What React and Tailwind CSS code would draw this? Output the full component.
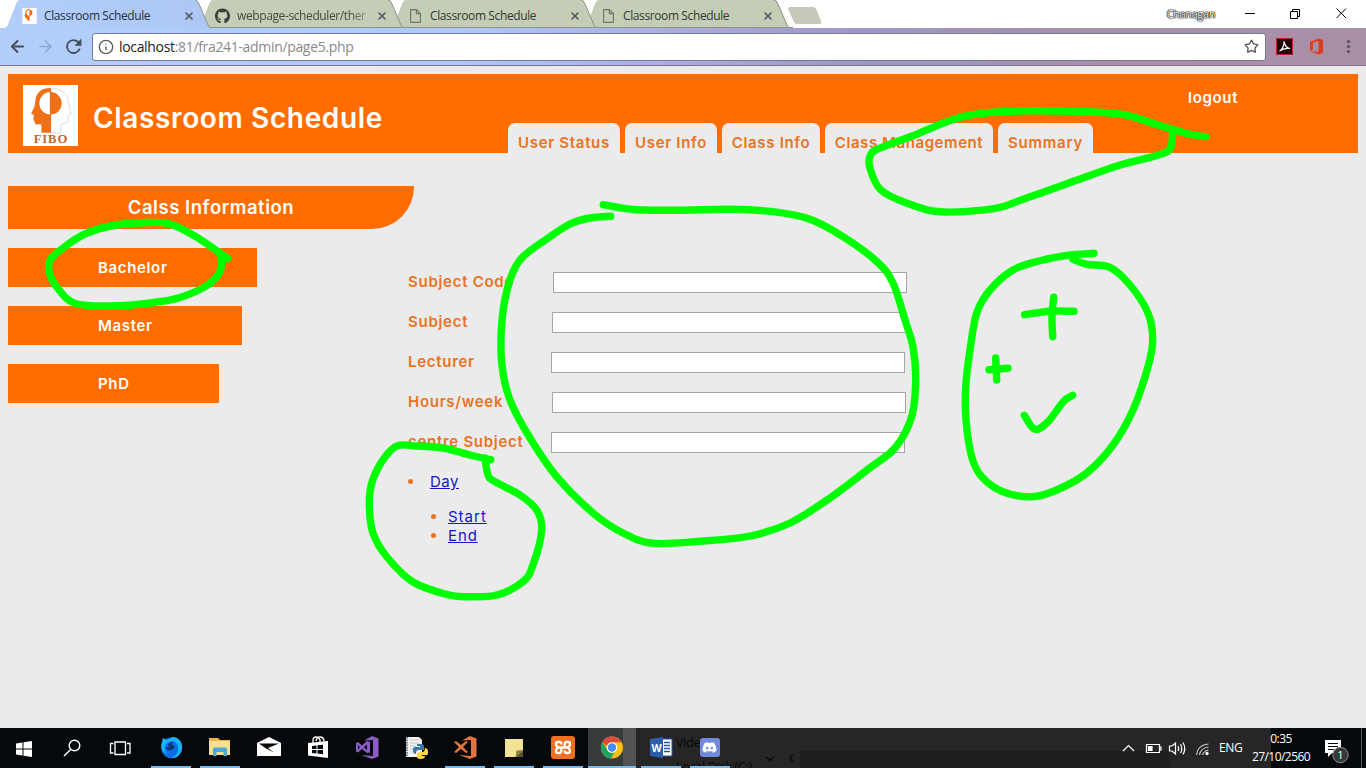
import React from "react";
import { FaGithub, FaDiscord } from "react-icons/fa";
import { ArrowLeft, ArrowRight, Info, Star, X, ChevronDown, ChevronLeft } from "lucide-react";

const STROKES = [
  [[603.3,204.7],[633,209.5],[677,210.3],[730,209.3],[773,211.7],[810,219.3],[843,236.7],[877,261.7],[893,283],[905,320],[913,347],[915.7,380],[911.7,416.7],[895,448],[867,470],[830,498],[790,523],[750,536],[703,541],[653,543.3],[623,533],[593,513],[557,477],[530,438],[510,400],[501.7,363],[502.3,317],[510,280],[521.7,258],[546.7,239],[570,224],[590,218],[610.7,216.3]],
  [[1206,136.7],[1189,134],[1158,125],[1124,114.7],[1086,111.7],[1008,111.3],[960,117.3],[912,136],[881,147.7],[871,154],[869.7,167],[881,190],[912,205],[943,212],[994,208.7],[1021,200],[1069,183],[1117,166],[1155,156],[1170,149],[1172.6,132]],
  [[227.5,258.5],[213,248],[193,235],[170,224],[147,222.5],[113,225.5],[87,233],[67,245],[50.5,259.5],[49.5,273],[58,288.5],[77,304],[123,305.5],[157,302],[180,297.5],[207,285.5],[220,271.5],[221,255]],
  [[490.7,459.7],[470,455],[443,448],[417,446],[398,445.5],[385,457],[372.7,480],[369.3,503],[373,533],[387,557],[413,582],[447,594.5],[467,596.7],[497,595],[523,581.7],[533,565],[541.7,530],[536.7,510],[520,495],[495,481.7],[488,475],[485,458]],
  [[1094,253.3],[1066.7,255.3],[1040,260.7],[1013,270],[990,290],[976.7,313],[970,350],[965.7,386.7],[966,420],[971.7,456.7],[981.7,476.7],[1003,491.7],[1031.7,496.7],[1056.7,490],[1086.7,473],[1113,445],[1133,410],[1148,366.7],[1152.7,340],[1148,313],[1130,285],[1110,267.3],[1086.7,264.3],[1073,259.3]],
  [[1024.7,314.7],[1050,311.3],[1074,311.3]],
  [[1053.7,297.3],[1052,316.7],[1052.7,336.7]],
  [[989,369.7],[1008,368.3]],
  [[995.7,358],[996.7,380]],
  [[1024.3,415.3],[1035,429.3],[1048,421.7],[1063.3,401.7],[1072.7,395.3]],
];

function smooth(points) {
  let d = `M${points[0][0]} ${points[0][1]}`;
  for (let i = 0; i < points.length - 1; i++) {
    const a = points[i - 1] || points[i];
    const b = points[i];
    const c = points[i + 1];
    const e = points[i + 2] || c;
    d += `C${b[0] + (c[0] - a[0]) / 6} ${b[1] + (c[1] - a[1]) / 6} ${c[0] - (e[0] - b[0]) / 6} ${c[1] - (e[1] - b[1]) / 6} ${c[0]} ${c[1]}`;
  }
  return d;
}

function Ink() {
  return (
    <svg className="pointer-events-none absolute left-0 top-0 z-50" width="1366" height="768" fill="none" stroke="#00ff00" strokeWidth="7.4" strokeLinecap="round" strokeLinejoin="round">
      {STROKES.map((s, i) => <path key={i} d={smooth(s)} />)}
    </svg>
  );
}

function FiboLogo({ className, label }) {
  return (
    <svg className={className} viewBox="0 0 54 60">
      <rect width="54" height="60" fill="#fff" />
      <path d="M27 3C17 3 12 9 12 17C12 20 10 24 8 28L11 30L10 33L12 38C13 40 17 38 18 39L18 47H27Z" fill="#f07018" />
      <path d="M27 3C38 3 44 9 45 17L47 29L44 31L44 36C42 38 39 37 37 39L37 47H27" fill="none" stroke="#d5d5dc" strokeWidth=".9" />
      <circle cx="27" cy="18" r="11" fill="#f07018" />
      <path d="M27 7A11 11 0 0 0 27 29Z" fill="#fff" />
      <path d="M27 3V47" stroke="#f07018" strokeWidth="1.2" />
      {label && <text x="27" y="57.500" textAnchor="middle" textLength="33" fontSize="12.500" fontWeight="700" fill="#c8642c" fontFamily="Liberation Serif, serif">FIBO</text>}
    </svg>
  );
}

function PageIcon() {
  return (
    <svg width="11" height="14" viewBox="0 0 11 14" fill="none" stroke="#6c7266" strokeWidth="1.1">
      <path d="M.6 .6H6.4L10.4 4.6V13.4H.6ZM6.4 .6V4.6H10.4" />
    </svg>
  );
}

const TABS = [
  { title: "Classroom Schedule", icon: <FiboLogo className="h-4 w-[15px]" />, z: "z-40 w-[193px]", fill: "url(#active)", text: "text-[#26303f]", active: true },
  { title: "webpage-scheduler/ther", icon: <FaGithub size={16} color="#3a3f38" />, z: "z-30 w-[193px]", fill: "#c4ceb7", text: "text-[#454b40] [mask-image:linear-gradient(90deg,#000_112px,#0005_132px)]" },
  { title: "Classroom Schedule", icon: <PageIcon />, z: "z-20 w-[193px]", fill: "#c4ceb7", text: "text-[#33382f]" },
  { title: "Classroom Schedule", icon: <PageIcon />, z: "z-10 w-[193px]", fill: "#c4ceb7", text: "text-[#33382f]" },
];

function BrowserTab({ tab }) {
  return (
    <div className={`relative h-7 ${tab.z}`}>
      <svg className="absolute left-0 top-0" width="210" height="28" viewBox="0 0 210 28">
        <defs>
          <linearGradient id="active"><stop offset="0" stopColor="#b2cffc" /><stop offset="1" stopColor="#adc6f5" /></linearGradient>
        </defs>
        <path d="M0 28C3 28 4 25 5 22L12 4Q13.5 0 16 0H191Q193.500 0 195 4L204 25Q205 28 208 28Z" fill={tab.fill} />
        <path d="M191 0Q193.500 0 195 4L204 25Q205 28 208 28" fill="none" stroke="#8b9188" strokeWidth="1" />
        {!tab.active && <path d="M0 27.500H210" stroke="#8d9688" strokeWidth="1" />}
      </svg>
      <div className="relative flex h-7 items-center pl-[18px] pt-[3px]">
        <div className="flex w-[15px] shrink-0 justify-center">{tab.icon}</div>
        <span className={`ml-[7px] block w-[134px] shrink-0 whitespace-nowrap text-[12px] leading-4 tracking-[-0.39px] ${tab.text}`}>{tab.title}</span>
        <X size={12} strokeWidth={3.2} color="#50565e" className="ml-[5px] shrink-0" />
      </div>
    </div>
  );
}

function BrowserChrome() {
  return (
    <div className="flex h-[66px] shrink-0 flex-col bg-white font-['Open_Sans','Noto_Sans',sans-serif]">
      <div className="flex h-7 items-start pl-[4px]">
        {TABS.map((t, i) => <BrowserTab key={i} tab={t} />)}
        <svg className="ml-[11px] mt-[7px]" width="36" height="18"><path d="M3 0H26Q28.500 0 29.500 3L34 14Q35 17 32 17H10Q7.500 17 6.500 14L1.500 3Q.5 0 3 0Z" fill="#c4c9ba" /></svg>
        <div className="ml-auto flex h-7 items-center">
          <span className="mr-[30px] text-[11px] tracking-[-0.4px] text-white [text-shadow:0_0_1px_#000,0_0_1px_#000,0_0_1px_#000,0_0_2px_#333]">Chanagan</span>
          <svg width="121" height="28" fill="none" stroke="#000" strokeWidth="1">
            <path d="M0 13.500H10M45.500 11.500H52.500V18.500H45.500ZM47.500 11.500V9.500H54.500V16.500H52.500M91.500 8.500L101 18M101 8.500L91.500 18" />
          </svg>
        </div>
      </div>
      <div className="flex h-[38px] items-center border-b border-[#7b7290] bg-[linear-gradient(90deg,#b2cffc_0,#aec9f5_34%,#a9a8d8_52%,#9c97c4_64%,#a88ea9_80%,#a98fa6_100%)] pl-[8px]">
        <ArrowLeft size={19} strokeWidth={2.4} color="#474d58" />
        <ArrowRight size={19} strokeWidth={2} color="#8fa7d1" className="ml-[9px]" />
        <svg className="ml-[9px]" width="19" height="19" viewBox="0 0 24 24" fill="#474d58"><path d="M18.600 5.400A9.300 9.300 0 1 0 21 14.500H18.500A7 7 0 1 1 17 7.200L13 11H22V2Z" /></svg>
        <div className="ml-[9px] flex h-7 w-[1174px] items-center rounded-[3px] border border-[#747a99] bg-white pl-[5px] pr-[6px]">
          <Info size={16} strokeWidth={2} color="#5a5a5a" />
          <span className="ml-[5px] text-[14px] leading-5 tracking-[-0.33px] text-[#8a8a8a]"><span className="text-[#1c1c1c]">localhost</span>:81/fra241-admin/page5.php</span>
          <Star size={15} strokeWidth={2.2} color="#5a5a5a" className="ml-auto" />
        </div>
        <svg className="ml-[10px]" width="17" height="17" viewBox="0 0 17 17"><rect x=".5" y=".5" width="16" height="16" fill="#1d0505" stroke="#c22027" /><path d="M3.500 13C6 12 8.500 7 8 3.500C9 8 11 10.500 14 10.500C10 10 6.500 10.500 3.500 13Z" fill="none" stroke="#fff" strokeWidth="1.200" /></svg>
        <svg className="ml-[16px]" width="15" height="17" viewBox="0 0 15 17"><path d="M1 4L9.500 .5L14 2V15L9.500 16.500L1 13L9.500 14V3L4 4.400V11.500L1 13Z" fill="#e03c1c" /></svg>
        <svg className="ml-[22px]" width="5" height="15" fill="#5b5062"><circle cx="2.500" cy="2.500" r="1.600" /><circle cx="2.500" cy="7.500" r="1.600" /><circle cx="2.500" cy="12.500" r="1.600" /></svg>
      </div>
    </div>
  );
}

const NAV = [
  { t: "User Status", c: "w-[112px] tracking-[0.68px]" },
  { t: "User Info", c: "w-[92px] tracking-[0.68px]" },
  { t: "Class Info", c: "w-[98px] tracking-[0.68px]" },
  { t: "Class Management", c: "w-[168px] tracking-[0.58px]" },
  { t: "Summary", c: "w-[95px] tracking-[0.8px]" },
];

const LEVELS = [
  { t: "Bachelor", c: "w-[249px]" },
  { t: "Master", c: "w-[234px]" },
  { t: "PhD", c: "w-[211px]" },
];

const FIELDS = [
  { t: "Subject Code", c: "w-[145px]" },
  { t: "Subject", c: "w-[144px]" },
  { t: "Lecturer", c: "w-[143px]" },
  { t: "Hours/week", c: "w-[144px]" },
  { t: "centre Subject", c: "w-[143px]" },
];

function Page() {
  return (
    <div className="flex h-[662px] shrink-0 flex-col bg-[#ebebeb] px-2 pt-2 font-[Inter,'Open_Sans',sans-serif]">
      <header className="flex h-[79px] shrink-0 bg-[#ff6d00] text-white">
        <FiboLogo className="ml-[15px] mt-[11px] h-[61px] w-[55px]" label />
        <h1 className="ml-[15px] mt-[26px] w-[400px] text-[28px] font-semibold leading-9 tracking-[0.64px]">Classroom Schedule</h1>
        <nav className="ml-[15px] flex gap-[5px] self-end">
          {NAV.map((n) => (
            <a key={n.t} className={`flex h-[30px] items-center justify-center whitespace-nowrap rounded-t-[7px] bg-[#ebebeb] pt-2.5 text-[15px] font-semibold text-[#e97320] ${n.c}`}>{n.t}</a>
          ))}
        </nav>
        <a className="ml-[95px] mt-[13px] text-[15px] font-semibold leading-[22px] tracking-[0.7px]">logout</a>
      </header>
      <main className="flex">
        <aside className="mt-[33px] flex w-[400px] flex-col gap-[19px] text-white">
          <h2 className="flex h-[43px] w-[406px] items-center justify-center rounded-br-[42px] bg-[#ff6d00] pt-px text-[18.5px] font-semibold tracking-[0.54px]">Calss Information</h2>
          {LEVELS.map((l) => (
            <a key={l.t} className={`flex h-[39px] items-center bg-[#ff6d00] pl-[90px] pt-0.5 text-[15px] font-semibold tracking-[0.65px] ${l.c}`}>{l.t}</a>
          ))}
        </aside>
        <section className="mt-[119px] flex flex-col text-[#e97320]">
          <div className="flex flex-col gap-[19px]">
            {FIELDS.map((f) => (
              <label key={f.t} className="flex h-[21px] items-center text-[15px] font-semibold tracking-[0.72px]">
                <span className={`shrink-0 whitespace-nowrap ${f.c}`}>{f.t}</span>
                <input className="h-[21px] w-[354px] border border-[#a5a5a5] bg-white outline-none" />
              </label>
            ))}
          </div>
          <ul className="mt-[19px] text-[15px] leading-[19px]">
            <li className="flex items-center"><Dot /><a className="ml-[17px] bg-[#eeeef0] tracking-[0.5px] text-[#1414c8] underline">Day</a></li>
            <li className="mt-4 pl-[23px]">
              <ul>
                <li className="flex items-center"><Dot /><a className="ml-[12px] tracking-[1px] text-[#1414c8] underline">Start</a></li>
                <li className="flex items-center"><Dot /><a className="ml-[12px] tracking-[0.9px] text-[#1414c8] underline">End</a></li>
              </ul>
            </li>
          </ul>
        </section>
      </main>
    </div>
  );
}

function Dot() {
  return <span className="size-[5px] shrink-0 rounded-full bg-[#e97320]" />;
}

const ICONS = {
  windows: <path d="M4 7.500L10.500 6.500V12.500H4ZM11.500 6.300L20 5V12.500H11.500ZM4 13.500H10.500V19.500L4 18.500ZM11.500 13.500H20V21L11.500 19.700Z" fill="#fff" />,
  search: <g fill="none" stroke="#fff" strokeWidth="1.400"><circle cx="14.500" cy="9.500" r="5.300" /><path d="M10.700 13.500L4 20" /></g>,
  tasks: <path d="M7 6H17.500V18.500H7ZM5.500 7.500H2.500V17H5.500M19 7.500H22V17H19" fill="none" stroke="#fff" strokeWidth="1.300" />,
  firefox: <g><circle cx="12.500" cy="12.800" r="10.500" fill="#0a6ee8" /><path d="M3 7L4 3L8 5L14 2C20 2 24 8 23 14C22 20 17 23.500 12 23C17 21 20 17 19 12C18 7 14 4 8 8C4 12 6 17 9 19C3 18 1 12 3 7Z" fill="#18b4f5" /><path d="M9 9L14 6.500L13 10L16 11C15 15 12 16 9 15L6 13L10 12Z" fill="#0a3577" /></g>,
  explorer: <g><path d="M1 3H10L12 5H22V8H1Z" fill="#e8b64c" /><path d="M1 6H22V20H1Z" fill="#fbe08c" /><path d="M5 21V14Q5 12.500 6.500 12.500H17.500Q19 12.500 19 14V21H15.500V17H8.500V21Z" fill="#4aa9d8" /></g>,
  mail: <g><path d="M0 8L12 2L24 8V21H0Z" fill="#fff" /><path d="M2 8.500H22L11 13L17 17.500L9 13.500Z" fill="#06090b" /></g>,
  store: <g><path d="M2 8L22 6V23L2 20.500Z" fill="#fff" /><path d="M7 8V5Q7 2 10 2T14 5V7M10 6Q11 1.500 14.500 2Q18 2.500 18 6.500" fill="none" stroke="#fff" strokeWidth="1.300" /><path d="M6 11L10.500 10.500V14H6ZM11.500 10.300L17 9.700V14H11.500ZM6 15H10.500V18.500L6 18ZM11.500 15H17V19.200L11.500 18.600Z" fill="#06090b" /></g>,
  vs: <g fill="#8a5cc4"><path d="M17 1L23.500 3.500V21.500L17 24L6 20L18 21V5L9 5.500Z" /><path d="M1 8L3 7L7 10.500L12 6L15 7V17.500L12 18L7 14L3 17.500L1 16.500ZM3 10V14.500L5 12.200ZM12 9.500L9 12.200L12 15Z" fillRule="evenodd" /></g>,
  vscode: <g fill="#e2733a"><path d="M17 1L23.500 3.500V21.500L17 24L6 20L18 21V5L9 5.500Z" /><path d="M1 7L3 6L8 10L13 6L15 7L10 12L15 17L13 18L8 14L3 18L1 17L6 12Z" /></g>,
  python: <g><path d="M2 2H15L18 5V22H2Z" fill="#f2f2f2" /><path d="M3 2V22" stroke="#555" strokeWidth="1.500" strokeDasharray="1.500 1" /><path d="M6 5H15M6 8H15M6 11H12M6 14H10M6 17H10" stroke="#bbb" strokeWidth=".8" /><path d="M13 9H17Q20 9 20 12V15H15Q12 15 12 18V19Q9 19 9 15T13 12H16V11H13Z" fill="#3978ae" /><path d="M21 13Q24 13 24 17T21 20H18V21H21Q21 24 17 24T13 22V19Q13 17 16 17H19Q21 16 21 13Z" fill="#ffd847" /></g>,
  note: <g><path d="M3 4H21V16L15 22H3Z" fill="#f3e394" /><path d="M21 15V22H13.500Z" fill="#5c542f" /><path d="M13.500 22L14.500 15.500L21 15Z" fill="#89804c" /></g>,
  xampp: <g><rect x="0" y="1" width="24" height="23" rx="3" fill="#f07022" /><path d="M10.300 9.500V9Q10.300 7 8.300 7H7Q5 7 5 9Q5 11.700 8 12.500Q5 13.300 5 16Q5 18 7 18H8.300Q10.300 18 10.300 16V12.500M8 12.500H16M13.700 12.500V9Q13.700 7 15.700 7H17Q19 7 19 9Q19 11.700 16 12.500Q19 13.300 19 16Q19 18 17 18H15.700Q13.700 18 13.700 16V15.500" fill="none" stroke="#fff" strokeWidth="2.300" /></g>,
  chrome: <g><circle cx="12" cy="12.500" r="11" fill="#fbc116" /><path d="M2.500 7A11 11 0 0 1 21.600 7.300H12A5.300 5.300 0 0 0 7 11.500Z" fill="#dd4b3e" /><path d="M2.500 7L7.500 15.300A5.300 5.300 0 0 0 14.500 17L11 23.500A11 11 0 0 1 2.500 7Z" fill="#1da462" /><circle cx="12" cy="12.500" r="5.300" fill="#fff" /><circle cx="12" cy="12.500" r="4.200" fill="#4c8bf5" /></g>,
  word: <g><path d="M12 4H23V21H12Z" fill="#fff" stroke="#2b579a" /><path d="M15 7.500H21M15 10.500H21M15 13.500H21M15 16.500H21" stroke="#2b579a" strokeWidth="1.300" /><path d="M1 4L14 2V23L1 21Z" fill="#2b5fab" /><text x="7.500" y="16.500" textAnchor="middle" fontSize="10.500" fontWeight="700" fill="#fff" fontFamily="Open Sans, sans-serif">W</text></g>,
};

function TaskIcon({ name }) {
  return <svg width="24" height="25" viewBox="0 0 24 25">{ICONS[name]}</svg>;
}

const APPS = [
  ["firefox", true], ["explorer", true], ["mail", false], ["store", false], ["vs", false],
  ["python", false], ["vscode", true], ["note", true], ["xampp", true],
];

function Underline({ wide }) {
  return <span className={wide ? "h-0.5 w-12 bg-[#76b9ed]" : "h-0.5 w-10 bg-[#76b9ed]"} />;
}

function Taskbar() {
  return (
    <div className="flex h-10 shrink-0 overflow-hidden bg-[#06090b] font-['Open_Sans','Noto_Sans',sans-serif] text-white">
      {["windows", "search", "tasks"].map((n) => (
        <div key={n} className="flex w-12 items-center justify-center"><TaskIcon name={n} /></div>
      ))}
      <div className="ml-[2px] flex w-[442px]">
        {APPS.map(([n, open]) => (
          <div key={n} className="flex flex-1 flex-col items-center justify-between pt-[7px]">
            <TaskIcon name={n} />
            {open && <Underline />}
          </div>
        ))}
      </div>
      <div className="flex w-12 flex-col items-center justify-between bg-[linear-gradient(90deg,#383b3c_72%,#535353_72%)] pt-[7px]">
        <TaskIcon name="chrome" />
        <Underline wide />
      </div>
      <div className="relative flex w-[635px] shrink-0 bg-[#262626]">
        <div className="absolute left-[40px] top-[5px] text-[13px] leading-[18px] tracking-[-0.5px] text-[#080808]">Vide</div>
        <div className="absolute left-[40px] top-[29px] whitespace-nowrap text-[13px] leading-[18px] tracking-[-0.5px] text-[#080808]">Local Disk (C:)</div>
        <div className="absolute left-[164px] top-[23px] h-[17px] w-[370px] bg-[#1f1f1f]" />
        <ChevronDown size={12} strokeWidth={3} color="#080808" className="absolute left-[128px] top-[25px]" />
        <ChevronLeft size={12} strokeWidth={3} color="#080808" className="absolute left-[149px] top-[24px]" />
        <div className="relative flex w-[49px] flex-col items-center justify-between pt-[7px]"><TaskIcon name="word" /><Underline /></div>
        <div className="relative flex w-[49px] flex-col items-center justify-between pt-[10px]">
          <div className="flex h-[19px] w-5 items-center justify-center rounded-[3px] bg-[#7289da]"><FaDiscord size={15} /></div>
          <Underline />
        </div>
        <div className="relative ml-auto flex items-center">
          <svg width="92" height="24" viewBox="0 0 92 24" fill="none" stroke="#fff" strokeWidth="1.200">
            <path d="M2 15L7.500 9.500L13 15" />
            <path d="M25.500 8.500H38.500V16.500H25.500ZM38.500 11H40V14H38.500" /><path d="M27.500 10.500H31V14.500H27.500Z" fill="#fff" />
            <path d="M48.500 10H51L54.500 7V18L51 15H48.500ZM57 10Q58.500 12.500 57 15M59.500 8Q62 12.500 59.500 17M62 6.500Q65.500 12.500 62 18.500" />
            <path d="M75.500 19Q76.500 9 87.500 8M78.500 19Q79.500 12 87.500 11M81.500 19Q82.500 15 87.500 14" opacity=".75" /><circle cx="86" cy="17.500" r="1.700" fill="#fff" stroke="none" />
          </svg>
          <span className="ml-[6px] mr-[28px] w-6 whitespace-nowrap text-[12px] tracking-[-0.4px]">ENG</span>
        </div>
      </div>
      <div className="relative z-10 flex flex-1">
        <div className="-ml-5 flex w-[60px] shrink-0 flex-col items-center whitespace-nowrap pt-[2px] text-[12px] leading-[18px] tracking-[-0.55px]"><span>0:35</span><span>27/10/2560</span></div>
        <svg className="ml-[14px] mt-[10px] shrink-0" width="26" height="26" viewBox="0 0 26 26">
          <path d="M0 2H16V15H7L3 19V15H0Z" fill="#fff" /><path d="M3 5.500H13M3 8.500H13M3 11.500H9" stroke="#06090b" />
          <circle cx="15.500" cy="17" r="7.700" fill="#39393b" stroke="#8a8a8a" />
          <text x="15.500" y="21" textAnchor="middle" fontSize="11" fill="#fff" fontFamily="Open Sans, sans-serif">1</text>
        </svg>
        <span className="ml-auto mr-1 w-px bg-[#5a5a5a]" />
      </div>
    </div>
  );
}

export default function App() {
  return (
    <div className="relative flex h-[768px] w-[1366px] flex-col overflow-hidden">
      <BrowserChrome />
      <Page />
      <Taskbar />
      <Ink />
    </div>
  );
}
